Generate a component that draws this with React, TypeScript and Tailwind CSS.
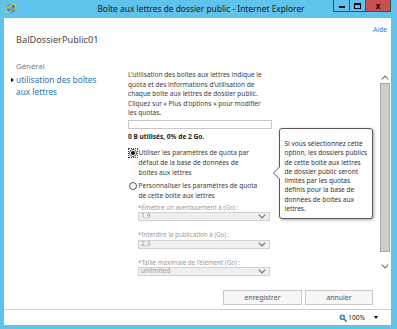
import React from "react";

const font = { fontFamily: '"Noto Sans", "Open Sans", sans-serif' };

function Chevron({ up = false }: { up?: boolean }) {
  return (
    <svg width="8" height="5" viewBox="0 0 8 5" className="block">
      <path d={up ? "M0.8 4.3 L4 1.1 L7.2 4.3" : "M0.8 0.7 L4 3.9 L7.2 0.7"} fill="none" stroke="#707070" strokeWidth="1.1" />
    </svg>
  );
}

function SelectBox({ value }: { value: string }) {
  return (
    <div className="w-[132px] h-[9px] border border-[#d2d2d2] bg-[#efefef] flex items-center justify-between pl-[2px] pr-[3px] text-[6.5px] leading-none text-[#9a9a9a]">
      <span>{value}</span>
      <Chevron />
    </div>
  );
}

export default function App() {
  return (
    <div className="w-[397px] h-[329px] bg-[#5fc3ec] flex flex-col overflow-hidden text-[#333]" style={font}>
      {/* Title bar */}
      <div className="h-[18px] shrink-0 flex items-start relative">
        <div className="pl-[5px] pt-[2px]">
          <svg width="12" height="12" viewBox="0 0 12 12" className="block">
            <circle cx="6" cy="6.3" r="4.2" fill="#2f7fcd" />
            <circle cx="5.2" cy="5.4" r="2" fill="#6fb3ea" />
            <ellipse cx="6" cy="6" rx="5.8" ry="2.5" transform="rotate(-35 6 6)" fill="none" stroke="#f2c21c" strokeWidth="1.1" />
          </svg>
        </div>
        <div className="flex-1 text-center text-[8.4px] leading-[18px] text-[#1a1a1a] pr-[12px]">
          Boîte aux lettres de dossier public - Internet Explorer
        </div>
        <div className="absolute left-[333px] top-0 flex h-[12px]">
          <div className="w-[17px] h-[12px] border border-[#2f5468] border-t-0 flex items-center justify-center">
            <div className="w-[6px] h-[2px] bg-black mt-[2px]" />
          </div>
          <div className="w-[16px] h-[12px] border border-[#2f5468] border-t-0 border-l-0 flex items-center justify-center">
            <div className="w-[7px] h-[6px] border border-black border-t-2" />
          </div>
          <div className="w-[25px] h-[12px] border border-[#2f5468] border-t-0 border-l-0 bg-[#c75050] flex items-center justify-center text-[8px] font-bold text-black leading-none">
            x
          </div>
        </div>
      </div>

      {/* Window client */}
      <div className="h-[307px] shrink-0 ml-[4px] mr-[6px] bg-white flex flex-col">
        <div className="h-[291px] flex flex-col overflow-hidden">
          {/* Header */}
          <div className="flex justify-between pl-[12px] pr-[4px] h-[28px] shrink-0">
            <div className="mt-[16px] text-[9.2px] leading-[12px] text-[#4a4a4a]">BalDossierPublic01</div>
            <div className="mt-[7px] text-[6.6px] leading-[10px] text-[#2a7cc9]">Aide</div>
          </div>

          <div className="flex">
            {/* Left nav */}
            <div className="w-[124px] pl-[12px] shrink-0">
              <div className="mt-[15px] text-[7.8px] leading-[10px] text-[#7a7a7a]">Général</div>
              <div className="relative mt-[3px] text-[8.3px] leading-[12px] text-[#2b73b8]">
                <span className="absolute left-[-5px] top-[4px] w-0 h-0 border-y-[2px] border-y-transparent border-l-[3px] border-l-black" />
                utilisation des boîtes
                <br />
                aux lettres
              </div>
            </div>

            {/* Content */}
            <div className="flex-1 relative">
              <div className="w-[144px] mt-[24px] text-[6.55px] leading-[9.5px] text-[#3c3c3c] whitespace-nowrap">
                <p>
                  L'utilisation des boîtes aux lettres indique le
                  <br />
                  quota et des informations d'utilisation de
                  <br />
                  chaque boîte aux lettres de dossier public.
                  <br />
                  Cliquez sur « Plus d'options » pour modifier
                  <br />
                  les quotas.
                </p>
                <div className="h-[9px] w-[144px] border border-[#c8c8c8] mt-[2px]" />
                <div className="font-bold mt-[3px] text-[6.6px] text-[#222]">0 B utilisés, 0% de 2 Go.</div>

                <div className="flex mt-[6.5px] leading-[10px]">
                  <div className="w-[10px] h-[10px] shrink-0 border border-dotted border-[#444] flex items-center justify-center">
                    <div className="w-[8px] h-[8px] rounded-full border border-[#555] flex items-center justify-center">
                      <div className="w-[4px] h-[4px] rounded-full bg-[#111]" />
                    </div>
                  </div>
                  <div className="pl-[0.5px]">
                    Utiliser les paramètres de quota par
                    <br />
                    défaut de la base de données de
                    <br />
                    boîtes aux lettres
                  </div>
                </div>

                <div className="flex mt-[3px] leading-[10px]">
                  <div className="w-[10px] h-[10px] shrink-0 flex items-center justify-center">
                    <div className="w-[8px] h-[8px] rounded-full border border-[#555]" />
                  </div>
                  <div className="pl-[0.5px]">
                    Personnaliser les paramètres de quota
                    <br />
                    de cette boîte aux lettres
                  </div>
                </div>

                <div className="pl-[10px] text-[6.2px] text-[#9a9a9a] mt-[2px]">
                  <div>*Émettre un avertissement à (Go) :</div>
                  <SelectBox value="1,9" />
                  <div className="mt-[9px]">*Interdire la publication à (Go) :</div>
                  <SelectBox value="2,3" />
                  <div className="mt-[9px]">*Taille maximale de l'élément (Go) :</div>
                  <SelectBox value="unlimited" />
                </div>
              </div>

              {/* Tooltip */}
              <div className="absolute left-[151px] top-[82px] w-[94px] h-[91px] border border-[#5a5a5a] rounded-[3px] bg-white shadow-[1px_1px_3px_rgba(0,0,0,0.35)] text-[6.55px] leading-[9.3px] text-[#333] pl-[4.5px] pt-[10px] whitespace-nowrap">
                <div className="absolute left-[-7px] top-[37px] w-0 h-0 border-y-[7px] border-y-transparent border-r-[7px] border-r-[#5a5a5a]" />
                <div className="absolute left-[-6px] top-[38px] w-0 h-0 border-y-[6px] border-y-transparent border-r-[6px] border-r-white" />
                Si vous sélectionnez cette
                <br />
                option, les dossiers publics
                <br />
                de cette boîte aux lettres
                <br />
                de dossier public seront
                <br />
                limités par les quotas
                <br />
                définis pour la base de
                <br />
                données de boîtes aux
                <br />
                lettres.
              </div>
            </div>

            {/* Scrollbar */}
            <div className="w-[12px] shrink-0 flex flex-col items-center">
              <div className="mt-[29px]"><Chevron up /></div>
              <div className="w-[10px] h-[169px] bg-[#cdcdcd] border border-[#a9a9a9] mt-[3px]" />
              <div className="mt-[12px]"><Chevron /></div>
            </div>
          </div>

          <div className="flex-1" />
          {/* Buttons */}
          <div className="flex justify-end gap-[3px] pr-[18px] mb-[4px] shrink-0">
            <div className="w-[79px] h-[15px] border border-[#c8c8c8] bg-[#f7f7f7] text-[6.9px] leading-[13px] text-center text-[#555]">enregistrer</div>
            <div className="w-[68px] h-[15px] border border-[#c8c8c8] bg-[#f7f7f7] text-[6.9px] leading-[13px] text-center text-[#555]">annuler</div>
          </div>
        </div>
        {/* Status bar */}
        <div className="h-[16px] shrink-0 border-t border-[#d0d0d0] bg-white flex items-center justify-end pr-[13px] text-[6.6px] text-[#222]">
          <svg width="8" height="8" viewBox="0 0 8 8" className="mr-[1px]">
            <circle cx="3.3" cy="3.3" r="2.8" fill="#3f8ad0" />
            <path d="M2 3.3h2.6M3.3 2v2.6" stroke="#fff" strokeWidth="0.9" />
            <path d="M5.3 5.3L7.6 7.6" stroke="#555" strokeWidth="1.3" />
          </svg>
          <span>100%</span>
          <span className="ml-[9px] w-0 h-0 border-x-[2.5px] border-x-transparent border-t-[3px] border-t-black" />
        </div>
      </div>
    </div>
  );
}
